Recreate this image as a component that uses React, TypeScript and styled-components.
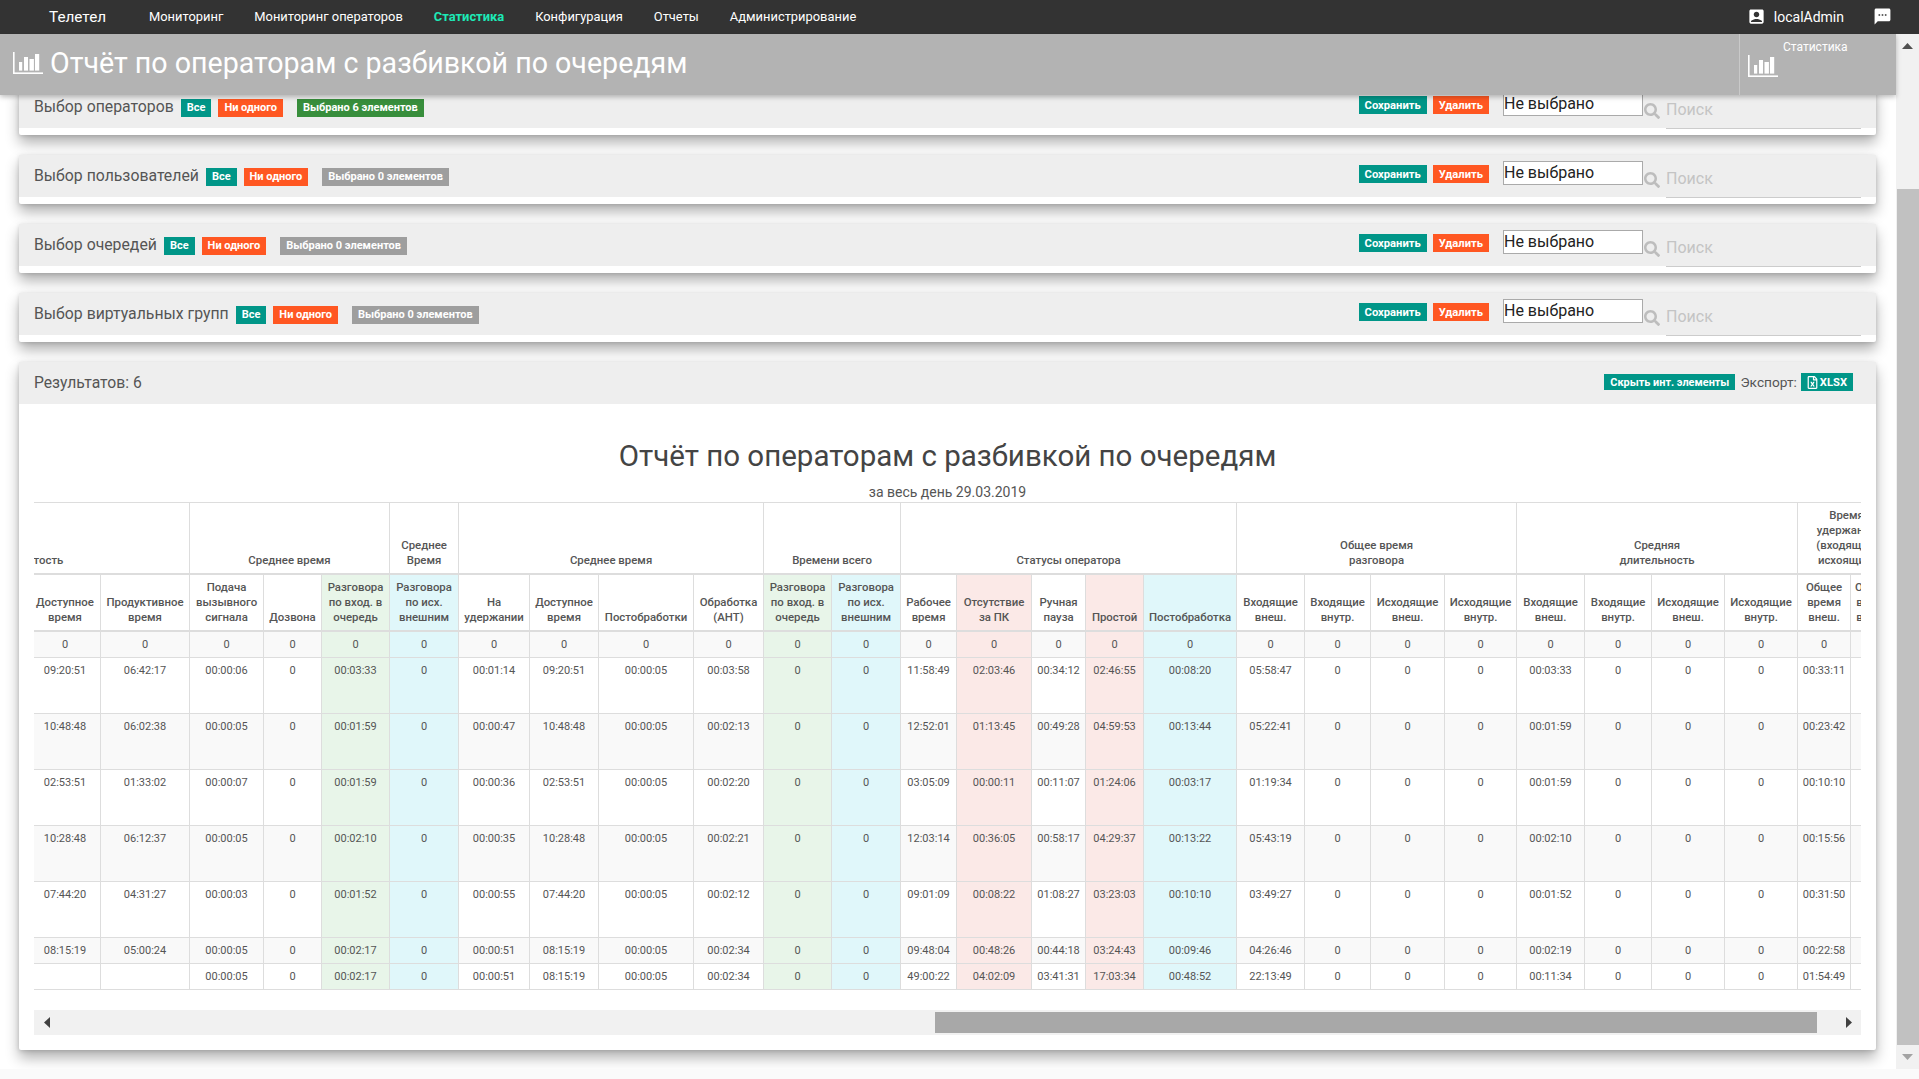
import React, { useLayoutEffect, useRef } from 'react'
import styled, { createGlobalStyle } from 'styled-components'
import { MdAccountBox, MdSms } from 'react-icons/md'
import { FaRegFileExcel, FaSearch } from 'react-icons/fa'

const GlobalStyle = createGlobalStyle`
  html, body {
    margin: 0;
    height: 100%;
    overflow: hidden;
    background: #fafafa;
    font-family: Roboto, "Liberation Sans", Arial, sans-serif;
    color: #555;
  }
  * {
    box-sizing: border-box;
  }
`

const Page = styled.div`
  height: 100vh;
  display: flex;
  flex-direction: column;
`

const TopNav = styled.nav`
  height: 34px;
  flex: none;
  background: #333;
  display: flex;
  align-items: center;
  padding: 0 27px 1px 49px;
  color: #fff;
`

const Brand = styled.span`
  font-size: 15.3px;
  width: 100px;
`

const NavLink = styled.a<{ $active?: boolean }>`
  font-size: 12.9px;
  margin-right: 31px;
  color: ${(p) => (p.$active ? '#1de9b6' : '#fff')};
  font-weight: ${(p) => (p.$active ? 700 : 400)};
`

const NavRight = styled.div`
  margin-left: auto;
  display: flex;
  align-items: center;
  font-size: 14px;

  svg {
    width: 19px;
    height: 19px;
  }
`

const UserName = styled.span`
  margin: 0 29px 0 8px;
`

const Stage = styled.div`
  height: calc(100vh - 44px);
  flex: none;
  display: flex;
`

const Viewport = styled.div`
  position: relative;
  flex: 1;
  min-width: 0;
`

const PageHeader = styled.header`
  position: absolute;
  top: 0;
  left: 0;
  right: 0;
  height: 61px;
  z-index: 5;
  background: #b3b3b3;
  color: #fff;
  display: flex;
  align-items: center;
  padding-left: 13px;
  box-shadow: 0 2px 5px rgba(0, 0, 0, 0.26);
`

const PageTitle = styled.h1`
  margin: 0 0 3px 7px;
  font-size: 28.6px;
  font-weight: 400;
`

const HeaderPanel = styled.div`
  margin-left: auto;
  width: 157px;
  height: 100%;
  border-left: 1px solid #c9c9c9;
  padding: 6px 0 0 8px;
`

const HeaderPanelTitle = styled.div`
  font-size: 12px;
  line-height: 14px;
  padding-left: 35px;
`

const ChartIcon: React.FC<{ className?: string }> = ({ className }) => (
  <svg className={className} viewBox='0 0 30 22' fill='#fff'>
    <rect x='0' y='0' width='1.6' height='22' />
    <rect x='0' y='20.4' width='30' height='1.6' />
    <rect x='6' y='10' width='3.2' height='8.6' />
    <rect x='11' y='5' width='4' height='13.6' />
    <rect x='16.5' y='7' width='4.4' height='11.6' />
    <rect x='22' y='2' width='4.2' height='16.6' />
  </svg>
)

const TitleChart = styled(ChartIcon)`
  width: 30px;
  height: 22px;
  flex: none;
  margin-bottom: 3px;
`

const PanelChart = styled(ChartIcon)`
  display: block;
  width: 30px;
  height: 22px;
  margin-top: 1px;
`

const Content = styled.main`
  height: 100%;
  overflow: hidden;
  background: #fff;
  padding: 211px 20px 26px 19px;
  display: flex;
  flex-direction: column;
  gap: 20px;
`

const ScrollRail = styled.div<{ $vertical?: boolean }>`
  flex: none;
  display: flex;
  flex-direction: ${(p) => (p.$vertical ? 'column' : 'row')};
  ${(p) => (p.$vertical ? 'width: 23px;' : 'height: 25px;')}
  background: #f1f1f1;
`

const RailButton = styled.div<{ $vertical?: boolean }>`
  flex: none;
  display: flex;
  align-items: center;
  justify-content: center;
  ${(p) => (p.$vertical ? 'height: 24px;' : 'width: 25px;')}
`

const RailTrack = styled.div`
  flex: 1;
  min-width: 0;
  min-height: 0;
`

const PageThumb = styled.div`
  height: 856px;
  margin: 131px 0 0 1px;
  background: #c1c1c1;
`

const TableThumb = styled.div`
  width: 882px;
  height: 21px;
  margin: 2px 0 0 876px;
  background: #a8a8a8;
`

const RailArrow: React.FC<{ dir: 'up' | 'down' | 'left' | 'right' }> = ({ dir }) => {
  const shapes = {
    up: { w: 11, h: 6, points: '0,6 11,6 5.5,0', fill: '#505050' },
    down: { w: 11, h: 6, points: '0,0 11,0 5.5,6', fill: '#a3a3a3' },
    left: { w: 6, h: 11, points: '6,0 6,11 0,5.5', fill: '#404040' },
    right: { w: 6, h: 11, points: '0,0 0,11 6,5.5', fill: '#404040' },
  }
  const s = shapes[dir]
  return (
    <svg width={s.w} height={s.h}>
      <polygon points={s.points} fill={s.fill} />
    </svg>
  )
}

const Card = styled.section`
  flex: none;
  background: #fff;
  border-radius: 2px;
  box-shadow: 0 8px 14px rgba(0, 0, 0, 0.3), 0 1px 4px rgba(0, 0, 0, 0.15);
`

const FilterCard = styled(Card)`
  padding-bottom: 7px;
`

const FilterHead = styled.div`
  height: 42px;
  background: #eee;
  padding: 0 15px;
  display: flex;
  align-items: flex-start;
`

const FilterTitle = styled.span`
  font-size: 15.8px;
  line-height: 18px;
  margin: 12px 7px 0 0;
  color: #555;
`

const Tag = styled.span<{ $color: string; $gap?: number }>`
  height: 18px;
  line-height: 18px;
  margin: 13px ${(p) => p.$gap ?? 7}px 0 0;
  padding: 0 6px;
  font-size: 11px;
  font-weight: 700;
  color: #fff;
  background: ${(p) => p.$color};
  white-space: nowrap;
`

const ActionButton = styled.button<{ $color: string; $gap?: number }>`
  height: 18px;
  margin: 10px ${(p) => p.$gap ?? 6}px 0 0;
  padding: 0 6px;
  border: 0;
  font-family: inherit;
  font-size: 11.2px;
  font-weight: 700;
  color: #fff;
  background: ${(p) => p.$color};
`

const Controls = styled.div`
  margin-left: auto;
  display: flex;
  align-items: flex-start;
`

const PresetSelect = styled.select`
  width: 140px;
  height: 24px;
  margin: 6px 0 0 8px;
  padding: 0 0 2px;
  appearance: none;
  border: 1px solid #aaa;
  border-radius: 0;
  background: #fff;
  font-family: inherit;
  font-size: 16px;
  color: #222;
`

const SearchGlyph = styled(FaSearch)`
  width: 16px;
  height: 16px;
  margin: 17px 6px 0 1px;
  color: #bdbdbd;
`

const SearchInput = styled.input`
  width: 195px;
  height: 38px;
  margin-top: 5px;
  padding: 0;
  border: 0;
  border-bottom: 1px solid #ccc;
  background: transparent;
  font-family: inherit;
  font-size: 16px;

  &::placeholder {
    color: #c4c4c4;
    opacity: 1;
  }
`

const ResultsHead = styled.div`
  height: 42px;
  background: #eee;
  padding: 0 23px 2px 15px;
  display: flex;
  align-items: center;
  font-size: 15.7px;
`

const HideButton = styled(ActionButton)`
  height: 16px;
  margin: 0 5px 0 auto;
  font-size: 10.9px;
`

const ExportLabel = styled.span`
  font-size: 13.7px;
`

const ExportButton = styled(ActionButton)`
  display: flex;
  align-items: center;
  gap: 2px;
  margin: 0 0 0 4px;
  padding: 0 6px;
  height: 18px;
  font-size: 11.2px;

  svg {
    width: 11px;
    height: 13px;
  }
`

const ResultsBody = styled.div`
  padding: 0 15px 15px;
`

const ReportTitle = styled.h2`
  margin: 0;
  padding-top: 35px;
  text-align: center;
  font-size: 29.5px;
  line-height: 35px;
  font-weight: 400;
  color: #444;
`

const ReportSubtitle = styled.div`
  margin-top: 8px;
  height: 20px;
  text-align: center;
  font-size: 14px;
  line-height: 20px;
`

const TableScroller = styled.div`
  overflow: hidden;
`

const ReportTable = styled.table`
  table-layout: fixed;
  width: 3676px;
  margin-bottom: 20px;
  border-collapse: collapse;
  font-size: 11px;
  line-height: 15px;
  color: #555;
`

type Tint = 'green' | 'cyan' | 'pink'

const tints: Record<Tint, string> = {
  green: '#e8f5e9',
  cyan: '#e0f7fa',
  pink: '#fbe9e7',
}

const HeadCell = styled.th<{ $tint?: Tint }>`
  padding: 5px 2px;
  border: 1px solid #ddd;
  border-bottom-width: 2px;
  vertical-align: bottom;
  text-align: center;
  font-size: 11.4px;
  font-weight: 500;
  white-space: pre-line;
  background: ${(p) => (p.$tint ? tints[p.$tint] : 'transparent')};
`

const BodyRow = styled.tr<{ $striped: boolean }>`
  background: ${(p) => (p.$striped ? '#f9f9f9' : '#fff')};
`

const BodyCell = styled.td<{ $tint?: Tint; $tall: boolean }>`
  height: ${(p) => (p.$tall ? 56 : 26)}px;
  padding: 5px 2px 4px;
  border: 1px solid #ddd;
  vertical-align: top;
  text-align: center;
  background: ${(p) => (p.$tint ? tints[p.$tint] : 'transparent')};
`

type Column = { title: string; width: number; tint?: Tint }

// the two leading columns stand for the part of the report scrolled out of view
const hiddenWidths = [1662, 148]

const columns: Column[] = [
  { title: 'Доступное\nвремя', width: 71 },
  { title: 'Продуктивное\nвремя', width: 89 },
  { title: 'Подача\nвызывного\nсигнала', width: 74 },
  { title: 'Дозвона', width: 58 },
  { title: 'Разговора\nпо вход. в\nочередь', width: 68, tint: 'green' },
  { title: 'Разговора\nпо исх.\nвнешним', width: 69, tint: 'cyan' },
  { title: 'На\nудержании', width: 71 },
  { title: 'Доступное\nвремя', width: 69 },
  { title: 'Постобработки', width: 95 },
  { title: 'Обработка\n(АНТ)', width: 70 },
  { title: 'Разговора\nпо вход. в\nочередь', width: 68, tint: 'green' },
  { title: 'Разговора\nпо исх.\nвнешним', width: 69, tint: 'cyan' },
  { title: 'Рабочее\nвремя', width: 56 },
  { title: 'Отсутствие\nза ПК', width: 75, tint: 'pink' },
  { title: 'Ручная\nпауза', width: 54 },
  { title: 'Простой', width: 58, tint: 'pink' },
  { title: 'Постобработка', width: 93, tint: 'cyan' },
  { title: 'Входящие\nвнеш.', width: 68 },
  { title: 'Входящие\nвнутр.', width: 66 },
  { title: 'Исходящие\nвнеш.', width: 74 },
  { title: 'Исходящие\nвнутр.', width: 72 },
  { title: 'Входящие\nвнеш.', width: 68 },
  { title: 'Входящие\nвнутр.', width: 67 },
  { title: 'Исходящие\nвнеш.', width: 73 },
  { title: 'Исходящие\nвнутр.', width: 73 },
  { title: 'Общее\nвремя\nвнеш.', width: 53 },
  { title: 'Общее\nвремя\nвнутр.', width: 45 },
]

const groups: { title: string; span: number }[] = [
  { title: '', span: 1 },
  { title: 'Занятость', span: 3 },
  { title: 'Среднее время', span: 3 },
  { title: 'Среднее\nВремя', span: 1 },
  { title: 'Среднее время', span: 4 },
  { title: 'Времени всего', span: 2 },
  { title: 'Статусы оператора', span: 5 },
  { title: 'Общее время\nразговора', span: 4 },
  { title: 'Средняя\nдлительность', span: 4 },
  { title: 'Время\nудержания\n(входящие,\nисхоящие)', span: 2 },
]

const zeroRow = columns.map(() => '0')

const row = (
  available: string,
  productive: string,
  ring: string,
  talk: string,
  hold: string,
  handle: string,
  work: string,
  away: string,
  pause: string,
  idle: string,
  after: string,
  total: string,
  avg: string,
  held: string,
): string[] => [
  available, productive, ring, '0', talk, '0', hold, available, '00:00:05', handle, '0', '0',
  work, away, pause, idle, after, total, '0', '0', '0', avg, '0', '0', '0', held, '0',
]

const rows: { cells: string[]; tall: boolean }[] = [
  { cells: zeroRow, tall: false },
  { cells: row('09:20:51', '06:42:17', '00:00:06', '00:03:33', '00:01:14', '00:03:58', '11:58:49', '02:03:46', '00:34:12', '02:46:55', '00:08:20', '05:58:47', '00:03:33', '00:33:11'), tall: true },
  { cells: row('10:48:48', '06:02:38', '00:00:05', '00:01:59', '00:00:47', '00:02:13', '12:52:01', '01:13:45', '00:49:28', '04:59:53', '00:13:44', '05:22:41', '00:01:59', '00:23:42'), tall: true },
  { cells: row('02:53:51', '01:33:02', '00:00:07', '00:01:59', '00:00:36', '00:02:20', '03:05:09', '00:00:11', '00:11:07', '01:24:06', '00:03:17', '01:19:34', '00:01:59', '00:10:10'), tall: true },
  { cells: row('10:28:48', '06:12:37', '00:00:05', '00:02:10', '00:00:35', '00:02:21', '12:03:14', '00:36:05', '00:58:17', '04:29:37', '00:13:22', '05:43:19', '00:02:10', '00:15:56'), tall: true },
  { cells: row('07:44:20', '04:31:27', '00:00:03', '00:01:52', '00:00:55', '00:02:12', '09:01:09', '00:08:22', '01:08:27', '03:23:03', '00:10:10', '03:49:27', '00:01:52', '00:31:50'), tall: true },
  { cells: row('08:15:19', '05:00:24', '00:00:05', '00:02:17', '00:00:51', '00:02:34', '09:48:04', '00:48:26', '00:44:18', '03:24:43', '00:09:46', '04:26:46', '00:02:19', '00:22:58'), tall: false },
  {
    cells: [
      '', '', '00:00:05', '0', '00:02:17', '0', '00:00:51', '08:15:19', '00:00:05', '00:02:34', '0', '0',
      '49:00:22', '04:02:09', '03:41:31', '17:03:34', '00:48:52', '22:13:49', '0', '0', '0', '00:11:34', '0', '0', '0', '01:54:49', '0',
    ],
    tall: false,
  },
]

const filters: { title: string; selected: number }[] = [
  { title: 'Выбор операторов', selected: 6 },
  { title: 'Выбор пользователей', selected: 0 },
  { title: 'Выбор очередей', selected: 0 },
  { title: 'Выбор виртуальных групп', selected: 0 },
]

const navItems = ['Мониторинг', 'Мониторинг операторов', 'Статистика', 'Конфигурация', 'Отчеты', 'Администрирование']

const TEAL = '#009688'
const ORANGE = '#ff5722'

const App: React.FC = () => {
  const contentRef = useRef<HTMLElement>(null)
  const tableRef = useRef<HTMLDivElement>(null)

  useLayoutEffect(() => {
    if (contentRef.current) contentRef.current.scrollTop = 159
    if (tableRef.current) tableRef.current.scrollLeft = 1815
  }, [])

  return (
    <Page>
      <GlobalStyle />
      <TopNav>
        <Brand>Телетел</Brand>
        {navItems.map((item) => (
          <NavLink key={item} $active={item === 'Статистика'}>
            {item}
          </NavLink>
        ))}
        <NavRight>
          <MdAccountBox />
          <UserName>localAdmin</UserName>
          <MdSms />
        </NavRight>
      </TopNav>

      <Stage>
        <Viewport>
          <PageHeader>
            <TitleChart />
            <PageTitle>Отчёт по операторам с разбивкой по очередям</PageTitle>
            <HeaderPanel>
              <HeaderPanelTitle>Статистика</HeaderPanelTitle>
              <PanelChart />
            </HeaderPanel>
          </PageHeader>

          <Content ref={contentRef}>
            {filters.map((filter) => (
              <FilterCard key={filter.title}>
                <FilterHead>
                  <FilterTitle>{filter.title}</FilterTitle>
                  <Tag $color={TEAL}>Все</Tag>
                  <Tag $color={ORANGE} $gap={14}>
                    Ни одного
                  </Tag>
                  <Tag $color={filter.selected > 0 ? '#388e3c' : '#9e9e9e'}>
                    Выбрано {filter.selected} элементов
                  </Tag>
                  <Controls>
                    <ActionButton $color={TEAL}>Сохранить</ActionButton>
                    <ActionButton $color={ORANGE}>Удалить</ActionButton>
                    <PresetSelect>
                      <option>Не выбрано</option>
                    </PresetSelect>
                    <SearchGlyph />
                    <SearchInput placeholder='Поиск' />
                  </Controls>
                </FilterHead>
              </FilterCard>
            ))}

            <Card>
              <ResultsHead>
                <span>Результатов: 6</span>
                <HideButton $color={TEAL}>Скрыть инт. элементы</HideButton>
                <ExportLabel>Экспорт:</ExportLabel>
                <ExportButton $color={TEAL}>
                  <FaRegFileExcel />
                  XLSX
                </ExportButton>
              </ResultsHead>
              <ResultsBody>
                <ReportTitle>Отчёт по операторам с разбивкой по очередям</ReportTitle>
                <ReportSubtitle>за весь день 29.03.2019</ReportSubtitle>
                <TableScroller ref={tableRef}>
                  <ReportTable>
                    <colgroup>
                      {hiddenWidths.map((width, i) => (
                        <col key={i} style={{ width }} />
                      ))}
                      {columns.map((column, i) => (
                        <col key={i} style={{ width: column.width }} />
                      ))}
                    </colgroup>
                    <thead>
                      <tr>
                        {groups.map((group, i) => (
                          <HeadCell key={i} colSpan={group.span}>
                            {group.title}
                          </HeadCell>
                        ))}
                      </tr>
                      <tr>
                        {hiddenWidths.map((_, i) => (
                          <HeadCell key={i} />
                        ))}
                        {columns.map((column, i) => (
                          <HeadCell key={i} $tint={column.tint}>
                            {column.title}
                          </HeadCell>
                        ))}
                      </tr>
                    </thead>
                    <tbody>
                      {rows.map((r, rowIndex) => (
                        <BodyRow key={rowIndex} $striped={rowIndex % 2 === 0}>
                          {hiddenWidths.map((_, i) => (
                            <BodyCell key={i} $tall={r.tall} />
                          ))}
                          {r.cells.map((cell, i) => (
                            <BodyCell key={i} $tall={r.tall} $tint={columns[i].tint}>
                              {cell}
                            </BodyCell>
                          ))}
                        </BodyRow>
                      ))}
                    </tbody>
                  </ReportTable>
                </TableScroller>
                <ScrollRail>
                  <RailButton>
                    <RailArrow dir='left' />
                  </RailButton>
                  <RailTrack>
                    <TableThumb />
                  </RailTrack>
                  <RailButton>
                    <RailArrow dir='right' />
                  </RailButton>
                </ScrollRail>
              </ResultsBody>
            </Card>
          </Content>
        </Viewport>

        <ScrollRail $vertical>
          <RailButton $vertical>
            <RailArrow dir='up' />
          </RailButton>
          <RailTrack>
            <PageThumb />
          </RailTrack>
          <RailButton $vertical>
            <RailArrow dir='down' />
          </RailButton>
        </ScrollRail>
      </Stage>
    </Page>
  )
}

export default App
